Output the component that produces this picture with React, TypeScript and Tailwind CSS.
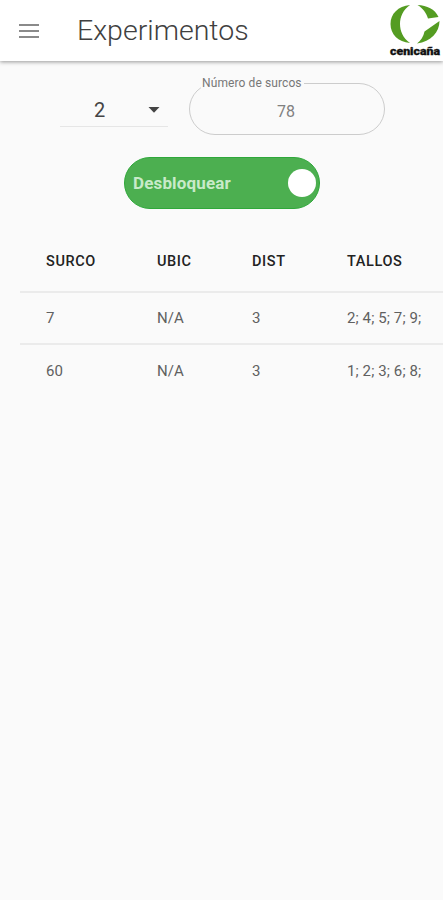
const columns = ["SURCO", "UBIC", "DIST", "TALLOS"];

const rows = [
  ["7", "N/A", "3", "2; 4; 5; 7; 9;"],
  ["60", "N/A", "3", "1; 2; 3; 6; 8;"],
];

function Logo() {
  return (
    <svg width="54" height="58" viewBox="0 0 54 58" role="img" aria-label="cenicaña">
      <path
        d="M21 5C9 6 1.500 14 1.500 24C1.500 34 9 42 21 43C14 38 11 31 11 24C11 17 14 10 21 5Z"
        fill="#549c22"
      />
      <path
        d="M28.500 5C38 5.500 46 9 49.500 17L39 18.500C37 12.500 34 8.500 28.500 5Z"
        fill="#549c22"
      />
      <path
        d="M50.500 21C50.500 32 42 41.500 28 43.500C32 40.500 34.500 36.500 35.500 31.500Z"
        fill="#549c22"
      />
      <text
        x="1"
        y="54.500"
        textLength="50"
        lengthAdjust="spacingAndGlyphs"
        fontFamily="Roboto, sans-serif"
        fontSize="10"
        fontWeight="900"
        fill="#111"
        stroke="#111"
        strokeWidth="0.3"
      >
        cenicaña
      </text>
    </svg>
  );
}

export default function App() {
  return (
    <div className="w-full min-h-screen overflow-hidden bg-[#fafafa] font-[Roboto,sans-serif]">
      {/* header */}
      <header className="h-[61px] flex items-center bg-white pl-[19px] shadow-[0_1px_4px_rgba(0,0,0,0.4)]">
        <button className="w-5 shrink-0 flex flex-col gap-[4px]" aria-label="Menu">
          <span className="h-[2px] bg-[#8a8a8a]" />
          <span className="h-[2px] bg-[#8a8a8a]" />
          <span className="h-[2px] bg-[#8a8a8a]" />
        </button>
        <h1 className="ml-[38px] pt-[2px] text-[28.500px] font-light text-[#404040]">
          Experimentos
        </h1>
        <div className="ml-auto self-start">
          <Logo />
        </div>
      </header>

      {/* filters */}
      <div className="flex pt-[22px] pl-[60px]">
        <div className="w-[108px] h-[44px] flex items-center border-b border-[#e6e6e6] pt-[10px]">
          <span className="ml-[34px] text-[20px] text-[#444]">2</span>
          <svg className="ml-auto mr-[8px]" width="12" height="6" viewBox="0 0 12 6">
            <path d="M0.500 0H11.500L6 5.800Z" fill="#444" />
          </svg>
        </div>
        <fieldset className="ml-[21px] -mt-[7px] w-[196px] h-[59px] rounded-[27px] border border-[#ccc]">
          <legend className="ml-[11px] pl-[1px] pr-[2px] text-[12px] leading-[14px] tracking-[0.1px] text-[#777]">
            Número de surcos
          </legend>
          <span className="block pt-[10px] pr-[2px] text-center text-[16px] leading-6 text-[#808080]">
            78
          </span>
        </fieldset>
      </div>

      {/* lock switch */}
      <button className="mt-[22px] ml-[124px] w-[196px] h-[52px] rounded-full border border-[#2fa83a] bg-[#4caf50] flex items-center justify-between pl-[8px] pr-[3px]">
        <span className="pt-px text-[17px] font-bold tracking-[0.15px] text-[#c8eac9]">Desbloquear</span>
        <span className="size-[28px] rounded-full bg-white" />
      </button>

      {/* table */}
      <table className="mt-[23px] ml-[20px] w-[423px] table-fixed border-collapse text-left">
        <colgroup>
          <col className="w-[111px]" />
          <col className="w-[95px]" />
          <col className="w-[95px]" />
          <col />
        </colgroup>
        <thead>
          <tr className="h-[60px] border-b-2 border-[#ebebeb]">
            {columns.map((name) => (
              <th key={name} className="pl-[26px] pt-px text-[14.500px] font-medium tracking-[0.6px] text-[#222]">
                {name}
              </th>
            ))}
          </tr>
        </thead>
        <tbody>
          {rows.map((row, i) => (
            <tr key={row[0]} className={i < rows.length - 1 ? "h-[52px] border-b-2 border-[#ebebeb]" : "h-[52px]"}>
              {row.map((cell, j) => (
                <td key={j} className="pl-[26px] pt-px whitespace-nowrap text-[15px] tracking-[0.1px] text-[#606060]">
                  {cell}
                </td>
              ))}
            </tr>
          ))}
        </tbody>
      </table>
    </div>
  );
}
